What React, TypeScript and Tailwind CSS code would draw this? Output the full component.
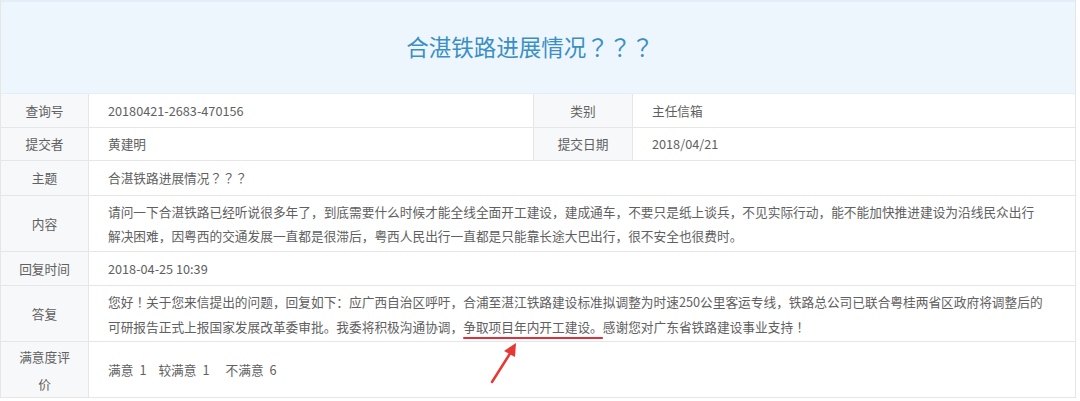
import React from "react";

const labelCls =
  "flex items-center justify-center bg-[#f7f8f9] border-r border-[#e6e6e6] px-3 text-center text-[#606060]";
const valueCls = "flex items-center pl-[19px] pr-3 text-[#606060]";

// centred full-width punctuation, as on the original page
const P: React.FC<{ children: React.ReactNode }> = ({ children }) => (
  <span style={{ fontFamily: '"Noto Sans CJK TC", sans-serif' }}>{children}</span>
);

const Row: React.FC<{ label: React.ReactNode; h: string; children: React.ReactNode }> = ({
  label,
  h,
  children,
}) => (
  <div className={`grid grid-cols-[88px_1fr] border-b border-[#e6e6e6] ${h}`}>
    <div className={labelCls}>{label}</div>
    <div className={valueCls}>{children}</div>
  </div>
);

const PairRow: React.FC<{
  l1: string;
  v1: string;
  l2: string;
  v2: string;
  h: string;
}> = ({ l1, v1, l2, v2, h }) => (
  <div className={`grid grid-cols-[88px_445px_99px_1fr] border-b border-[#e6e6e6] ${h}`}>
    <div className={labelCls}>{l1}</div>
    <div className={`${valueCls} border-r border-[#e6e6e6]`}>{v1}</div>
    <div className={labelCls}>{l2}</div>
    <div className={valueCls}>{v2}</div>
  </div>
);

export default function App() {
  return (
    <div
      className="w-[1080px] h-[401px] bg-white overflow-hidden text-[12.7px]"
      style={{ fontFamily: '"Noto Sans CJK SC", "Open Sans", sans-serif' }}
    >
      <div className="relative w-[1076px] border-x border-[#e6e6e6]">
        <div className="h-[94px] bg-[#eef6fd] border-t-[2px] border-b border-[#e3eef8] flex items-center justify-center">
          <h1 className="text-[22.5px] text-[#3b8fc5] leading-none pb-[2px] pr-[16px]">
            合湛铁路进展情况<P>？？？</P>
          </h1>
        </div>

        <PairRow h="h-[34px]" l1="查询号" v1="20180421-2683-470156" l2="类别" v2="主任信箱" />
        <PairRow h="h-[33px]" l1="提交者" v1="黄建明" l2="提交日期" v2="2018/04/21" />
        <Row h="h-[35px]" label="主题">
          <span>
            合湛铁路进展情况<P>？？？</P>
          </span>
        </Row>
        <Row h="h-[56px]" label="内容">
          <p className="leading-[24px] whitespace-nowrap">
            请问一下合湛铁路已经听说很多年了，到底需要什么时候才能全线全面开工建设，建成通车，不要只是纸上谈兵，不见实际行动，能不能加快推进建设为沿线民众出行
            <br />
            解决困难，因粤西的交通发展一直都是很滞后，粤西人民出行一直都是只能靠长途大巴出行，很不安全也很费时。
          </p>
        </Row>
        <Row h="h-[34px]" label="回复时间">
          2018-04-25 10:39
        </Row>
        <Row h="h-[56px]" label="答复">
          <p className="leading-[25px] whitespace-nowrap">
            您好<P>！</P>关于您来信提出的问题，回复如下：应广西自治区呼吁，合浦至湛江铁路建设标准拟调整为时速250公里客运专线，铁路总公司已联合粤桂两省区政府将调整后的
            <br />
            可研报告正式上报国家发展改革委审批。我委将积极沟通协调，
            <span className="underline decoration-[#e02f3a] decoration-2 underline-offset-[5px]">
              争取项目年内开工建设。
            </span>
            感谢您对广东省铁路建设事业支持<P>！</P>
          </p>
        </Row>
        <Row h="h-[56px]" label={<span className="leading-[27px]">满意度评价</span>}>
          <div className="flex">
            <span>
              满意<span className="ml-[6px]">1</span>
            </span>
            <span className="ml-[12px]">
              较满意<span className="ml-[6px]">1</span>
            </span>
            <span className="ml-[16px]">
              不满意<span className="ml-[6px]">6</span>
            </span>
          </div>
        </Row>

        <svg
          className="absolute left-[484px] top-[340px]"
          width="40"
          height="46"
          viewBox="0 0 40 46"
        >
          <line x1="7" y1="42" x2="26" y2="12" stroke="#e53935" strokeWidth="2.5" strokeLinecap="round" />
          <polygon points="31,3 19,11 30,17" fill="#e53935" />
        </svg>
      </div>
    </div>
  );
}
